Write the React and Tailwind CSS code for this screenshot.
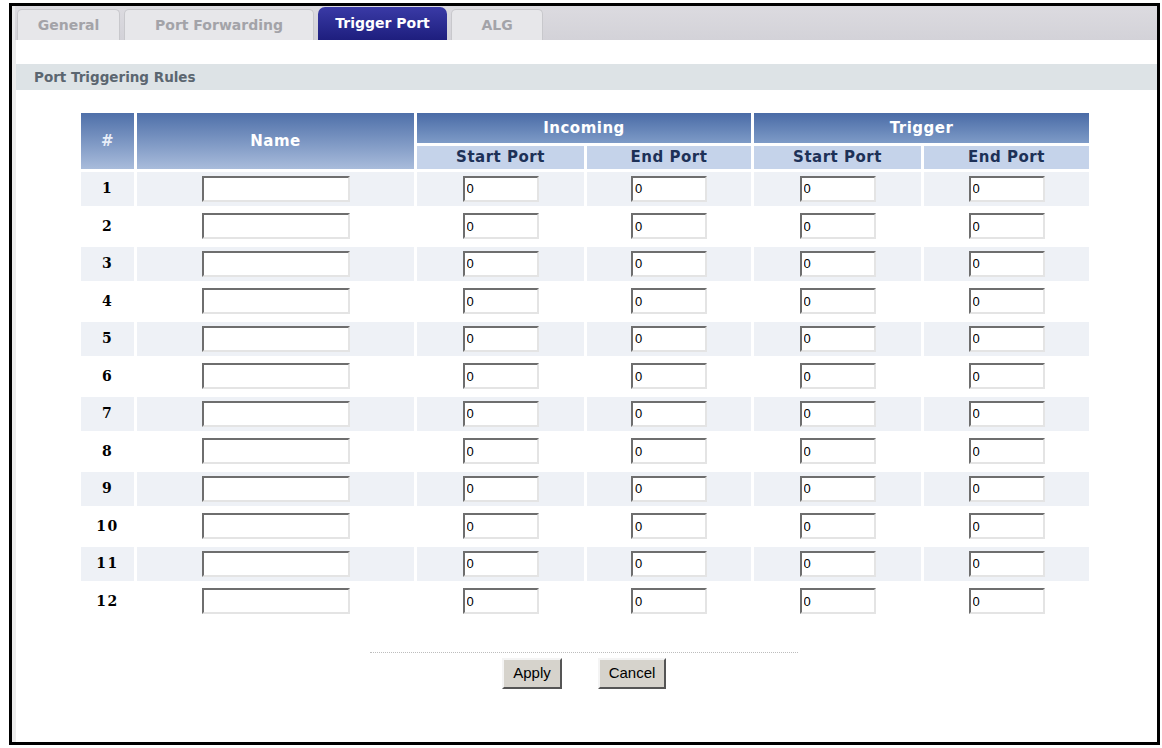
import React from 'react'

const tabs = [
  { label: 'General', w: 'w-[103px]' },
  { label: 'Port Forwarding', w: 'w-[190px]' },
  { label: 'Trigger Port', w: 'w-[129px]', active: true },
  { label: 'ALG', w: 'w-[92px]' },
]

const rows = Array.from({ length: 12 }, (_, i) => i + 1)

function Field({ w }) {
  return (
    <input
      type="text"
      defaultValue={w === 'name' ? '' : '0'}
      className={`${w === 'name' ? 'w-[148px]' : 'w-[76px]'} h-[26px] bg-white border-2 border-t-[#6e6e6e] border-l-[#6e6e6e] border-b-[#e4e4e4] border-r-[#e4e4e4] pl-[2px] text-[13px] font-normal tracking-normal text-black outline-none font-['Liberation_Sans',Arial,sans-serif]`}
    />
  )
}

function Btn({ children, w }) {
  return (
    <button className={`${w} h-[31px] bg-[#d6d3cc] border-2 border-t-[#f4f4f4] border-l-[#f4f4f4] border-b-[#555] border-r-[#555] text-[15px] text-black font-['Liberation_Sans',Arial,sans-serif]`}>
      {children}
    </button>
  )
}

export default function App() {
  return (
    <div className="w-[1162px] h-[748px] bg-white pl-[9px] pt-[3px] font-['DejaVu_Sans',Verdana,sans-serif]">
      <div className="w-[1151px] h-[742px] border-[3px] border-black bg-white flex flex-col">
        {/* tab strip */}
        <div className="h-[34px] bg-gradient-to-b from-[#dcdbe0] to-[#d3d2d8] flex items-end pl-[2px] gap-[4px] border-l-[3px] border-[#e8e8ea]">
          {tabs.map(t =>
            t.active ? (
              <div key={t.label} className={`${t.w} h-[33px] rounded-t-[7px] bg-gradient-to-b from-[#3a3aa6] to-[#1e1e7e] flex items-center justify-center text-white font-bold text-[14px]`}>
                {t.label}
              </div>
            ) : (
              <div key={t.label} className={`${t.w} h-[31px] rounded-t-[5px] bg-[#e7e7ea] border border-b-0 border-[#c8c8cc] flex items-center justify-center text-[#a3a3a8] font-bold text-[14px]`}>
                {t.label}
              </div>
            )
          )}
        </div>

        <div className="flex-1 flex flex-col border-l-[4px] border-[#ececec]">
          {/* section title */}
          <div className="mt-[24px] h-[26px] bg-[#dde3e6] flex items-center pl-[18px] text-[13.5px] font-bold text-[#5b6670]">
            Port Triggering Rules
          </div>

          <div className="pl-[65px] mt-[20px]">
            <table className="border-separate border-spacing-[3px] -ml-[3px] text-[15px] tracking-[0.5px] font-bold">
              <thead>
                <tr className="h-[30px]">
                  <th rowSpan={2} className="w-[53px] bg-gradient-to-b from-[#4f70a9] to-[#a9bcdb] text-[#e8eef8] font-bold">#</th>
                  <th rowSpan={2} className="w-[277px] bg-gradient-to-b from-[#4f70a9] to-[#a9bcdb] text-white font-bold">Name</th>
                  <th colSpan={2} className="bg-gradient-to-b from-[#4a6ba6] to-[#7e9bc7] text-white font-bold">Incoming</th>
                  <th colSpan={2} className="bg-gradient-to-b from-[#4a6ba6] to-[#7e9bc7] text-white font-bold">Trigger</th>
                </tr>
                <tr className="h-[22px]">
                  <th className="w-[167px] bg-[#c5d3ea] text-[#1d3157] font-bold">Start Port</th>
                  <th className="w-[164px] bg-[#c5d3ea] text-[#1d3157] font-bold">End Port</th>
                  <th className="w-[167px] bg-[#c5d3ea] text-[#1d3157] font-bold">Start Port</th>
                  <th className="w-[165px] bg-[#c5d3ea] text-[#1d3157] font-bold">End Port</th>
                </tr>
              </thead>
              <tbody>
                {rows.map(n => {
                  const bg = n % 2 ? 'bg-[#eef1f6]' : 'bg-white'
                  return (
                    <tr key={n} className="h-[34.5px]">
                      <td className={`${bg} text-center text-black text-[14px] tracking-[1.5px] font-['DejaVu_Serif',Georgia,serif]`}>{n}</td>
                      <td className={`${bg} text-center`}><Field w="name" /></td>
                      <td className={`${bg} text-center`}><Field /></td>
                      <td className={`${bg} text-center`}><Field /></td>
                      <td className={`${bg} text-center`}><Field /></td>
                      <td className={`${bg} text-center`}><Field /></td>
                    </tr>
                  )
                })}
              </tbody>
            </table>
          </div>

          {/* actions */}
          <div className="mt-[30px] ml-[354px] w-[428px] border-t border-dotted border-[#bdbdbd]" />
          <div className="mt-[5px] flex gap-[36px] ml-[486px]">
            <Btn w="w-[60px]">Apply</Btn>
            <Btn w="w-[68px]">Cancel</Btn>
          </div>
        </div>
      </div>
    </div>
  )
}
